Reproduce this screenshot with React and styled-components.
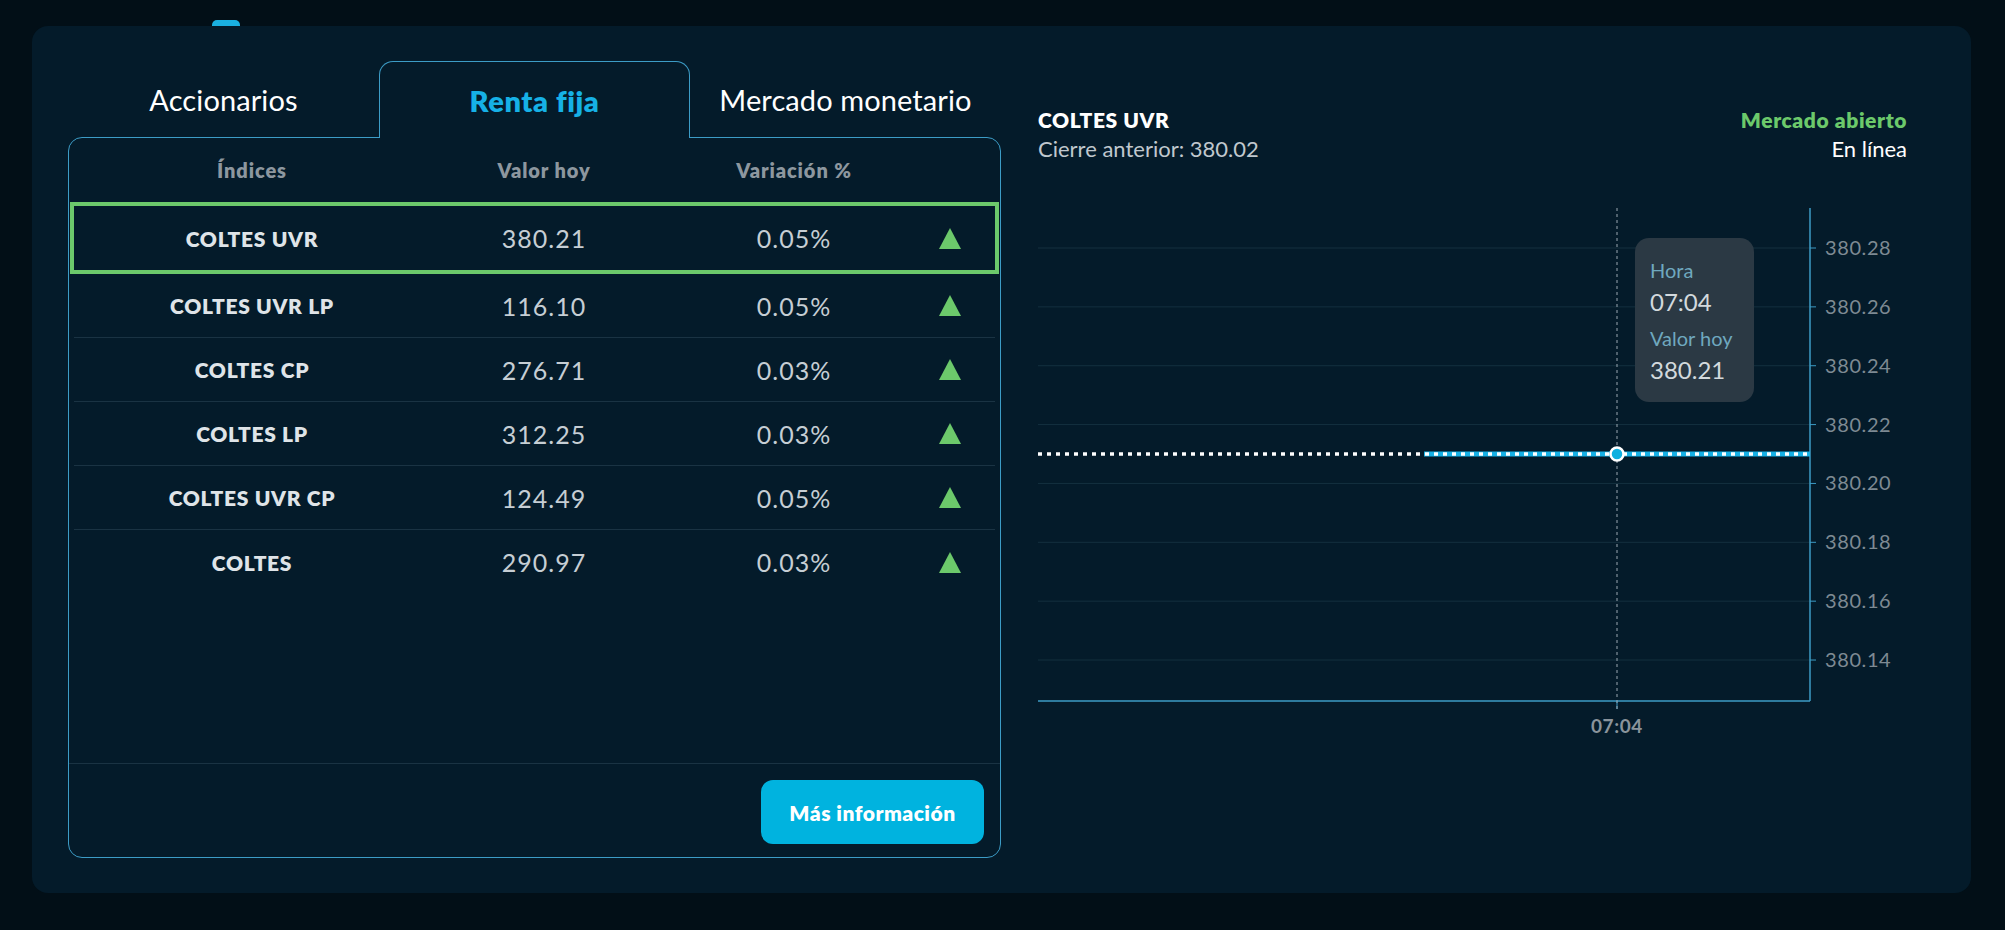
import React from 'react'
import styled, { createGlobalStyle } from 'styled-components'

const GlobalStyle = createGlobalStyle`
  html, body {
    margin: 0;
    padding: 0;
    background: #020f17;
    font-family: Lato, "Noto Sans", sans-serif;
  }
`

const Page = styled.div`
  width: 2005px;
  height: 930px;
  padding-top: 20px;
  box-sizing: border-box;
`

const Notch = styled.div`
  width: 28px;
  height: 6px;
  margin-left: 212px;
  background: #1ab0e0;
  border-radius: 5px 5px 0 0;
`

const Card = styled.div`
  margin-left: 32px;
  width: 1939px;
  height: 867px;
  background: #041b2a;
  border-radius: 16px;
  padding: 35px 0 0 36px;
  box-sizing: border-box;
  display: flex;
  gap: 37px;
`

const LeftColumn = styled.div`
  width: 933px;
  display: flex;
  flex-direction: column;
`

const Tabs = styled.div`
  display: grid;
  grid-template-columns: repeat(3, 1fr);
  height: 76px;
  position: relative;
  z-index: 2;
`

const Tab = styled.div`
  display: flex;
  align-items: center;
  justify-content: center;
  font-size: 29px;
  letter-spacing: ${p => (p.$active ? '0.6px' : '0.1px')};
  font-weight: ${p => (p.$active ? 800 : 400)};
  color: ${p => (p.$active ? '#16b1e6' : '#ffffff')};
  box-sizing: border-box;
  ${p =>
    p.$active &&
    `
    border: 1px solid #3c9cc6;
    border-bottom: none;
    border-radius: 14px 14px 0 0;
    background: #041b2a;
    height: 77px;
  `}
`

const TableBox = styled.div`
  height: 721px;
  border: 1px solid #3c9cc6;
  border-radius: 14px;
  box-sizing: border-box;
  display: flex;
  flex-direction: column;
  position: relative;
  z-index: 1;
`

const Columns = styled.div`
  display: grid;
  grid-template-columns: 356px 228px 272px 40px;
  align-items: center;
  & > * {
    text-align: center;
  }
`

const HeaderRow = styled(Columns)`
  height: 64px;
  padding: 0 5px;
  font-size: 20px;
  letter-spacing: 0.9px;
  font-weight: 800;
  color: #8d979f;
`

const Body = styled.div`
  flex: 1;
  display: flex;
  flex-direction: column;
`

const Row = styled(Columns)`
  box-sizing: border-box;
  margin: ${p => (p.$active ? '0 1px' : '0 5px')};
  border: ${p => (p.$active ? '4px solid #6cc96b' : 'none')};
  height: ${p => (p.$active ? '72px' : '64px')};
  border-bottom: ${p =>
    p.$active ? '4px solid #6cc96b' : p.$last ? 'none' : '1px solid #1a3343'};
`

const Name = styled.div`
  font-size: 21px;
  letter-spacing: 0.7px;
  font-weight: 800;
  color: #dfe4e8;
`

const Value = styled.div`
  font-size: 25px;
  letter-spacing: 1px;
  color: #c6ced4;
`

const Arrow = styled.div`
  display: flex;
  justify-content: center;
  svg {
    display: block;
  }
`

const Footer = styled.div`
  border-top: 1px solid #1a3343;
  padding: 16px 16px 13px;
  display: flex;
  justify-content: flex-end;
`

const Button = styled.button`
  width: 223px;
  height: 64px;
  border: none;
  border-radius: 12px;
  background: #00b3df;
  color: #ffffff;
  font-family: inherit;
  font-size: 21px;
  letter-spacing: 0.5px;
  font-weight: 800;
  cursor: pointer;
`

const RightColumn = styled.div`
  width: 869px;
  padding-top: 44px;
  display: flex;
  flex-direction: column;
`

const InfoBar = styled.div`
  display: flex;
  justify-content: space-between;
  line-height: 29px;
`

const InfoBlock = styled.div`
  display: flex;
  flex-direction: column;
  align-items: ${p => (p.$right ? 'flex-end' : 'flex-start')};
`

const Title = styled.div`
  font-size: 21px;
  letter-spacing: 0.6px;
  font-weight: 800;
  color: ${p => p.$color || '#ffffff'};
`

const Sub = styled.div`
  font-size: 22px;
  color: ${p => p.$color || '#c0c8ce'};
`

const ChartWrap = styled.div`
  position: relative;
  margin-top: 37px;
  width: 864px;
  height: 540px;
  svg {
    display: block;
  }
`

const Tooltip = styled.div`
  position: absolute;
  left: 597px;
  top: 38px;
  width: 119px;
  height: 164px;
  box-sizing: border-box;
  padding: 16px 15px;
  background: #2b3944;
  border-radius: 14px;
  font-family: Lato, sans-serif;
`

const TipLabel = styled.div`
  font-size: 20px;
  line-height: 32px;
  color: #6fa8bf;
  margin-top: ${p => (p.$spaced ? '4px' : '0')};
`

const TipValue = styled.div`
  font-size: 24px;
  line-height: 32px;
  color: #d3d9dd;
`

const rows = [
  ['COLTES UVR', '380.21', '0.05%'],
  ['COLTES UVR LP', '116.10', '0.05%'],
  ['COLTES CP', '276.71', '0.03%'],
  ['COLTES LP', '312.25', '0.03%'],
  ['COLTES UVR CP', '124.49', '0.05%'],
  ['COLTES', '290.97', '0.03%'],
]

const ticks = ['380.28', '380.26', '380.24', '380.22', '380.20', '380.18', '380.16', '380.14']

function UpTriangle() {
  return (
    <svg width="22" height="21" viewBox="0 0 22 21">
      <polygon points="11,0 22,21 0,21" fill="#6cc96b" />
    </svg>
  )
}

function Chart() {
  const axisX = 772
  const top = 8
  const bottom = 501
  const step = 58.86
  const lineY = 254
  const pointX = 579
  return (
    <svg width="864" height="540" viewBox="0 0 864 540">
      {ticks.map((t, i) => {
        const y = 48 + i * step
        return (
          <g key={t}>
            <line x1="0" x2={axisX} y1={y} y2={y} stroke="#14303f" strokeWidth="1" />
            <line x1={axisX} x2={axisX + 6} y1={y} y2={y} stroke="#3c9cc6" strokeWidth="1" />
            <text
              x={axisX + 15}
              y={y + 7}
              fill="#7e8a93"
              fontSize="20"
              letterSpacing="0.6"
              fontFamily="Lato, sans-serif"
            >
              {t}
            </text>
          </g>
        )
      })}
      <line x1={axisX} x2={axisX} y1={top} y2={bottom} stroke="#3c9cc6" strokeWidth="1.5" />
      <line x1="0" x2={axisX} y1={bottom} y2={bottom} stroke="#3c9cc6" strokeWidth="1.5" />
      <line x1={pointX} x2={pointX} y1={bottom} y2={bottom + 8} stroke="#3c9cc6" strokeWidth="1" />
      <line
        x1={pointX}
        x2={pointX}
        y1={top}
        y2={bottom + 10}
        stroke="#9aa7b0"
        strokeWidth="1"
        strokeDasharray="3 3"
      />
      <line x1="386" x2={axisX} y1={lineY} y2={lineY} stroke="#16b1e6" strokeWidth="5" />
      <line
        x1="0"
        x2={axisX}
        y1={lineY}
        y2={lineY}
        stroke="#ffffff"
        strokeWidth="3.5"
        strokeDasharray="4 5"
      />
      <circle cx={pointX} cy={lineY} r="6.5" fill="#0fb0e0" stroke="#ffffff" strokeWidth="2.5" />
      <text
        x={pointX}
        y="533"
        fill="#8a949c"
        fontSize="19"
        letterSpacing="0.6"
        fontWeight="700"
        textAnchor="middle"
        fontFamily="Lato, sans-serif"
      >
        07:04
      </text>
    </svg>
  )
}

export default function App() {
  return (
    <Page>
      <GlobalStyle />
      <Notch />
      <Card>
        <LeftColumn>
          <Tabs>
            <Tab>Accionarios</Tab>
            <Tab $active>Renta fija</Tab>
            <Tab>Mercado monetario</Tab>
          </Tabs>
          <TableBox>
            <HeaderRow>
              <div>Índices</div>
              <div>Valor hoy</div>
              <div>Variación %</div>
              <div />
            </HeaderRow>
            <Body>
              {rows.map(([name, value, change], i) => (
                <Row key={name} $active={i === 0} $last={i === rows.length - 1}>
                  <Name>{name}</Name>
                  <Value>{value}</Value>
                  <Value>{change}</Value>
                  <Arrow>
                    <UpTriangle />
                  </Arrow>
                </Row>
              ))}
            </Body>
            <Footer>
              <Button>Más información</Button>
            </Footer>
          </TableBox>
        </LeftColumn>
        <RightColumn>
          <InfoBar>
            <InfoBlock>
              <Title>COLTES UVR</Title>
              <Sub>Cierre anterior: 380.02</Sub>
            </InfoBlock>
            <InfoBlock $right>
              <Title $color="#6cc96b">Mercado abierto</Title>
              <Sub $color="#ffffff">En línea</Sub>
            </InfoBlock>
          </InfoBar>
          <ChartWrap>
            <Chart />
            <Tooltip>
              <TipLabel>Hora</TipLabel>
              <TipValue>07:04</TipValue>
              <TipLabel $spaced>Valor hoy</TipLabel>
              <TipValue>380.21</TipValue>
            </Tooltip>
          </ChartWrap>
        </RightColumn>
      </Card>
    </Page>
  )
}
